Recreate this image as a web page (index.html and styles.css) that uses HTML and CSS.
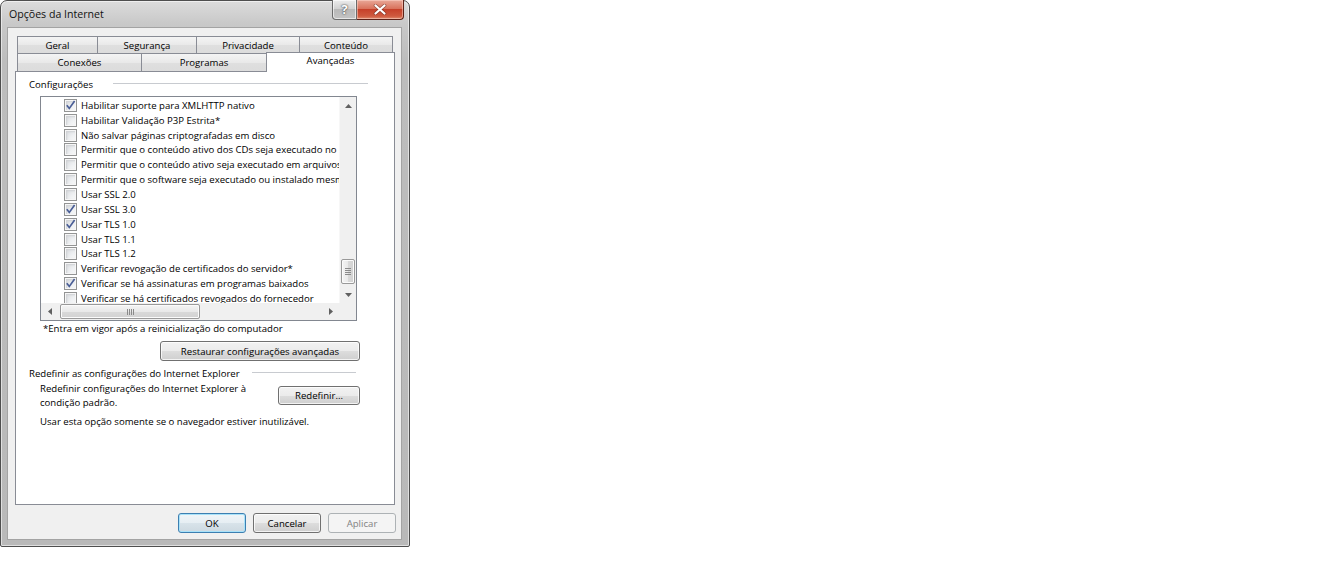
FILE: index.html
```html
<!DOCTYPE html>
<html lang="pt">
<head>
<meta charset="utf-8">
<title>Opções da Internet</title>
<link rel="stylesheet" href="styles.css">
</head>
<body>
<div class="window">
  <div class="titlebar">
    <span class="title">Opções da Internet</span>
    <div class="caption">
      <div class="cap-btn help"><span>?</span></div>
      <div class="cap-btn close">
        <svg width="14" height="11" viewBox="0 0 14 11"><path d="M2.5 1.5 L11.5 9.5 M11.5 1.5 L2.5 9.5" stroke="#5b2419" stroke-width="3.6" stroke-linecap="round" opacity=".55"/><path d="M2.5 1.5 L11.5 9.5 M11.5 1.5 L2.5 9.5" stroke="#fff" stroke-width="2.2" stroke-linecap="round"/></svg>
      </div>
    </div>
  </div>
  <div class="client">
    <div class="tabs">
      <div class="tabrow back">
        <div class="tab t-geral">Geral</div>
        <div class="tab t-seg">Segurança</div>
        <div class="tab t-priv">Privacidade</div>
        <div class="tab t-cont">Conteúdo</div>
      </div>
      <div class="tabrow front">
        <div class="tab t-conex">Conexões</div>
        <div class="tab t-prog">Programas</div>
        <div class="tab sel t-avanc">Avançadas</div>
      </div>
    </div>
    <div class="panel">
      <div class="grp-head grp1">
        <span>Configurações</span>
        <span class="grp-line line1"></span>
      </div>
      <div class="listbox">
        <div class="items">
          <div class="item"><span class="cb on"><svg width="11" height="11" viewBox="0 0 11 11"><path d="M1.8 5.2 L4.3 8.4 L9.6 1" fill="none" stroke="#4a5e96" stroke-width="1.7"/></svg></span><span>Habilitar suporte para XMLHTTP nativo</span></div>
          <div class="item"><span class="cb"></span><span>Habilitar Validação P3P Estrita*</span></div>
          <div class="item"><span class="cb"></span><span>Não salvar páginas criptografadas em disco</span></div>
          <div class="item"><span class="cb"></span><span>Permitir que o conteúdo ativo dos CDs seja executado no computador</span></div>
          <div class="item"><span class="cb"></span><span>Permitir que o conteúdo ativo seja executado em arquivos do computador</span></div>
          <div class="item"><span class="cb"></span><span>Permitir que o software seja executado ou instalado mesmo se a assinatura for inválida</span></div>
          <div class="item"><span class="cb"></span><span>Usar SSL 2.0</span></div>
          <div class="item"><span class="cb on"><svg width="11" height="11" viewBox="0 0 11 11"><path d="M1.8 5.2 L4.3 8.4 L9.6 1" fill="none" stroke="#4a5e96" stroke-width="1.7"/></svg></span><span>Usar SSL 3.0</span></div>
          <div class="item"><span class="cb on"><svg width="11" height="11" viewBox="0 0 11 11"><path d="M1.8 5.2 L4.3 8.4 L9.6 1" fill="none" stroke="#4a5e96" stroke-width="1.7"/></svg></span><span>Usar TLS 1.0</span></div>
          <div class="item"><span class="cb"></span><span>Usar TLS 1.1</span></div>
          <div class="item"><span class="cb"></span><span>Usar TLS 1.2</span></div>
          <div class="item"><span class="cb"></span><span>Verificar revogação de certificados do servidor*</span></div>
          <div class="item"><span class="cb on"><svg width="11" height="11" viewBox="0 0 11 11"><path d="M1.8 5.2 L4.3 8.4 L9.6 1" fill="none" stroke="#4a5e96" stroke-width="1.7"/></svg></span><span>Verificar se há assinaturas em programas baixados</span></div>
          <div class="item"><span class="cb"></span><span>Verificar se há certificados revogados do fornecedor</span></div>
        </div>
        <div class="vscroll">
          <div class="sb-btn"><svg width="7" height="4" viewBox="0 0 7 4"><path d="M0 4 L3.5 0 L7 4 Z" fill="#606060"/></svg></div>
          <div class="vtrack"><div class="vthumb"><svg width="6" height="7" viewBox="0 0 6 7"><path d="M0 0.5 H6 M0 2.5 H6 M0 4.5 H6 M0 6.5 H6" stroke="#8a8a8a" stroke-width="1"/></svg></div></div>
          <div class="sb-btn"><svg width="7" height="4" viewBox="0 0 7 4"><path d="M0 0 L3.5 4 L7 0 Z" fill="#606060"/></svg></div>
        </div>
        <div class="hscroll">
          <div class="sb-btn"><svg width="4" height="7" viewBox="0 0 4 7"><path d="M4 0 L0 3.5 L4 7 Z" fill="#606060"/></svg></div>
          <div class="htrack"><div class="hthumb"><svg width="7" height="6" viewBox="0 0 7 6"><path d="M0.5 0 V6 M2.5 0 V6 M4.5 0 V6 M6.5 0 V6" stroke="#8a8a8a" stroke-width="1"/></svg></div></div>
          <div class="sb-btn"><svg width="4" height="7" viewBox="0 0 4 7"><path d="M0 0 L4 3.5 L0 7 Z" fill="#606060"/></svg></div>
        </div>
        <div class="corner"></div>
      </div>
      <div class="footnote">*Entra em vigor após a reinicialização do computador</div>
      <div class="btn restore-btn">Restaurar configurações avançadas</div>
      <div class="grp-head grp2">
        <span>Redefinir as configurações do Internet Explorer</span>
        <span class="grp-line line2"></span>
      </div>
      <div class="reset-row">
        <div class="reset-text">Redefinir configurações do Internet Explorer à<br>condição padrão.</div>
        <div class="btn reset-btn">Redefinir...</div>
      </div>
      <div class="reset-note">Usar esta opção somente se o navegador estiver inutilizável.</div>
    </div>
    <div class="dlg-buttons">
      <div class="btn dlg default">OK</div>
      <div class="btn dlg">Cancelar</div>
      <div class="btn dlg disabled">Aplicar</div>
    </div>
  </div>
</div>
</body>
</html>
```
FILE: styles.css
```css
* { box-sizing: border-box; }
body {
  margin: 0;
  background: #fff;
  font-family: "Open Sans", "Noto Sans", sans-serif;
  font-size: 9.6px;
  color: #000;
}
.window {
  width: 410px;
  height: 547px;
  border: 1px solid #4e4e4e;
  border-radius: 7px 7px 2px 2px;
  background: linear-gradient(#dcdcdc, #c9c9c9 22px, #bdbdbd 60px, #b9b9b9);
  box-shadow: inset 0 0 0 1px rgba(255,255,255,.55);
  padding: 0 8px 7px 7px;
  display: flex;
  flex-direction: column;
}
.titlebar {
  height: 27px;
  display: flex;
  align-items: flex-start;
  margin-right: -3px;
}
.title {
  padding-left: 1px;
  line-height: 27px;
  font-size: 10.6px;
  color: #111;
}
.caption {
  margin-left: auto;
  margin-top: -1px;
  display: flex;
  height: 20px;
}
.cap-btn {
  display: flex;
  align-items: center;
  justify-content: center;
  height: 20px;
}
.help {
  width: 25px;
  border: 1px solid #6b6b6b;
  border-top: none;
  border-radius: 0 0 0 4px;
  background: linear-gradient(#ececec, #d2d2d2 45%, #b9b9b9 50%, #c4c4c4);
  box-shadow: inset 0 0 0 1px rgba(255,255,255,.6);
}
.help span {
  color: #fff;
  font-weight: 700;
  font-size: 13px;
  line-height: 1;
  text-shadow: 0 0 2px #444, 0 0 1px #444;
}
.close {
  width: 47px;
  border: 1px solid #5d2218;
  border-top: none;
  border-left: none;
  border-radius: 0 0 4px 0;
  background: linear-gradient(#e9a898, #d9735d 45%, #c6412a 50%, #cf5a3f 85%, #e08d6f);
  box-shadow: inset 0 0 0 1px rgba(255,220,210,.5);
}
.client {
  flex: 1;
  background: #f0f0f0;
  padding: 8px 0 0 7px;
  box-shadow: 0 0 0 1px #a3a3a3;
  display: flex;
  flex-direction: column;
}
.tabs { padding-left: 2px; }
.tabrow { display: flex; }
.tab {
  border: 1px solid #898c95;
  border-bottom: none;
  background: linear-gradient(#f4f4f4, #e9e9e9 50%, #dfdfdf 51%, #dcdcdc);
  text-align: center;
  white-space: nowrap;
}
.tab + .tab { margin-left: -1px; }
.back .tab { height: 17px; line-height: 18px; }
.front .tab { height: 18px; line-height: 18px; }
.t-geral { width: 81px; }
.t-seg { width: 100px; }
.t-priv { width: 104px; }
.t-cont { width: 94px; }
.t-conex { width: 125px; }
.t-prog { width: 126px; }
.tab.sel {
  width: 129px;
  height: 20px;
  margin-top: -1px;
  margin-bottom: -1px;
  line-height: 16px;
  background: #fff;
  position: relative;
  z-index: 1;
}
.panel {
  width: 380px;
  height: 434px;
  border: 1px solid #898c95;
  background: #fff;
  padding: 5px 0 0 13px;
  display: flex;
  flex-direction: column;
}
.grp-head {
  display: flex;
  align-items: center;
  justify-content: space-between;
  line-height: 15px;
  height: 15px;
  white-space: nowrap;
}
.grp1 { width: 339px; }
.grp2 { width: 327px; margin-top: 5px; }
.grp-line {
  height: 1px;
  background: #c8cbd0;
  box-shadow: 0 1px 0 #fff;
  margin-top: -3px;
}
.line1 { width: 255px; }
.line2 { width: 104px; }
.listbox {
  margin: 4px 0 0 11px;
  width: 317px;
  height: 225px;
  border: 1px solid #828790;
  display: grid;
  grid-template-columns: 298px 17px;
  grid-template-rows: 206px 17px;
}
.items {
  overflow: hidden;
  padding: 1px 0 0 23px;
}
.item {
  height: 14.85px;
  display: flex;
  align-items: center;
  white-space: nowrap;
}
.cb {
  flex: none;
  width: 13px;
  height: 13px;
  margin-right: 4px;
  border: 1px solid #939494;
  background: linear-gradient(135deg, #d6d8dc, #eef0f2 60%, #fbfbfb);
  box-shadow: inset 0 0 0 1px #f6f6f6, inset 1px 1px 2px 1px #cfd1d4;
  display: flex;
  align-items: center;
  justify-content: center;
}
.vscroll {
  display: flex;
  flex-direction: column;
  background: #f0f0f0;
  border-left: 1px solid #f7f7f7;
}
.hscroll {
  display: flex;
  background: #f0f0f0;
}
.sb-btn {
  flex: none;
  width: 17px;
  height: 17px;
  display: flex;
  align-items: center;
  justify-content: center;
}
.vtrack { flex: 1; }
.vthumb {
  margin: 145px 0 0 1px;
  width: 14px;
  height: 25px;
  border: 1px solid #999;
  border-radius: 2px;
  background: linear-gradient(to right, #f4f4f4, #e9e9e9 50%, #d9d9d9 51%, #d2d2d2);
  box-shadow: inset 0 0 0 1px #fbfbfb;
  display: flex;
  align-items: center;
  justify-content: center;
}
.htrack { flex: 1; }
.hthumb {
  margin: 1px 0 0 2px;
  width: 140px;
  height: 15px;
  border: 1px solid #999;
  border-radius: 2px;
  background: linear-gradient(#f4f4f4, #e9e9e9 50%, #d9d9d9 51%, #d2d2d2);
  box-shadow: inset 0 0 0 1px #fbfbfb;
  display: flex;
  align-items: center;
  justify-content: center;
}
.corner { background: #f0f0f0; }
.footnote {
  margin-left: 14px;
  line-height: 15px;
  white-space: nowrap;
}
.btn {
  border: 1px solid #707070;
  border-radius: 3px;
  background: linear-gradient(#f2f2f2, #ebebeb 50%, #dddddd 51%, #cfcfcf);
  box-shadow: inset 0 0 0 1px rgba(255,255,255,.75);
  display: flex;
  align-items: center;
  justify-content: center;
  white-space: nowrap;
}
.restore-btn {
  align-self: flex-start;
  margin: 5px 0 0 131px;
  width: 200px;
  height: 20px;
}
.reset-row {
  display: flex;
  margin: 1px 0 0 11px;
  width: 320px;
}
.reset-text { line-height: 14px; }
.reset-btn {
  margin: 4px 0 0 auto;
  width: 82px;
  height: 19px;
}
.reset-note {
  margin: 5px 0 0 11px;
  line-height: 14px;
  white-space: nowrap;
}
.dlg-buttons {
  display: flex;
  justify-content: flex-end;
  gap: 7px;
  margin-top: 8px;
  padding-right: 5px;
}
.dlg {
  width: 68px;
  height: 20px;
}
.dlg.default {
  border-color: #3c7fb1;
  box-shadow: inset 0 0 0 1px #a9e2f9;
  background: linear-gradient(#f0f5f8, #e6eef3 50%, #d8e3ea 51%, #cdd9e1);
}
.dlg.disabled {
  border-color: #adb2b5;
  background: #f4f4f4;
  box-shadow: none;
  color: #838383;
}
```
